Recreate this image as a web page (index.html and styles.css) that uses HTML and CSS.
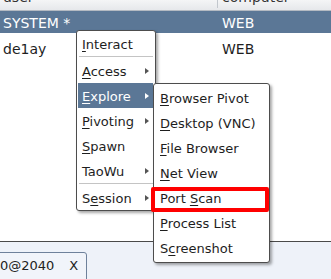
FILE: index.html
```html
<!DOCTYPE html>
<html lang="en">
<head>
  <meta charset="UTF-8" />
  <title>Sessions</title>
  <link rel="stylesheet" href="styles.css">
</head>
<body>
  <div class="table">
    <div class="thead">
      <div class="th">user</div>
      <div class="th th-last">computer</div>
    </div>
    <div class="row selected">
      <div class="td">SYSTEM *</div>
      <div class="td td-last">WEB</div>
    </div>
    <div class="row">
      <div class="td">de1ay</div>
      <div class="td td-last">WEB</div>
    </div>
  </div>

  <div class="dock">
    <div class="tab">0@2040<span class="tab-close">X</span></div>
  </div>

  <!-- context menu -->
  <div class="menu main-menu">
    <div class="item"><u>I</u>nteract</div>
    <div class="sep"></div>
    <div class="item sub"><u>A</u>ccess</div>
    <div class="item sub active"><u>E</u>xplore</div>
    <div class="item sub"><u>P</u>ivoting</div>
    <div class="item"><u>S</u>pawn</div>
    <div class="item sub">TaoWu</div>
    <div class="sep"></div>
    <div class="item sub">S<u>e</u>ssion</div>
  </div>

  <div class="menu sub-menu">
    <div class="item"><u>B</u>rowser Pivot</div>
    <div class="item"><u>D</u>esktop (VNC)</div>
    <div class="item"><u>F</u>ile Browser</div>
    <div class="item"><u>N</u>et View</div>
    <div class="item">Port <u>S</u>can</div>
    <div class="item"><u>P</u>rocess List</div>
    <div class="item">S<u>c</u>reenshot</div>
  </div>

  <div class="mark"></div>
</body>
</html>
```

FILE: styles.css
```css
* {
  margin: 0;
  padding: 0;
  box-sizing: border-box;
}

body {
  font-family: 'DejaVu Sans', 'Liberation Sans', sans-serif;
  font-size: 13px;
  color: #1e1e1e;
  background: #fff;
  width: 331px;
  height: 279px;
  overflow: hidden;
  position: relative;
}

.table {
  height: 242px;
  border-bottom: 1px solid #4a4a4a;
  background: #fff;
  font-size: 14px;
}

.thead {
  display: grid;
  grid-template-columns: 217px 1fr;
  height: 11px;
  overflow: hidden;
  background: linear-gradient(#f4f5f6, #e6e8eb);
  border-bottom: 1px solid #b4bac2;
  color: #333;
}

.th {
  height: 22px;
  line-height: 22px;
  margin-top: -14px;
  padding-left: 3px;
}

.th-last {
  border-left: 1px solid #c2c7cd;
  padding-left: 4px;
}

.row {
  display: grid;
  grid-template-columns: 217px 1fr;
  height: 22px;
  line-height: 25px;
}

.row + .row {
  margin-top: 3px;
  line-height: 26px;
}

.td {
  padding-left: 3px;
  white-space: nowrap;
}

.td-last {
  padding-left: 5px;
}

.selected {
  background: #5b7796;
  color: #fff;
}

.dock {
  height: 37px;
  background: #eef2f9;
  padding-top: 10px;
  overflow: hidden;
}

.tab {
  display: inline-block;
  margin-left: -10px;
  padding-left: 9px;
  padding-right: 8px;
  height: 30px;
  line-height: 26px;
  border: 1px solid #6e819b;
  border-radius: 0 3px 0 0;
  background: #f1f4fa;
  color: #222;
}

.tab-close {
  margin-left: 15px;
}

.menu {
  position: absolute;
  background: #fff;
  border: 1px solid #4d4d4d;
  border-radius: 3px;
  box-shadow: 2px 2px 3px rgba(0, 0, 0, 0.35);
  padding: 0 2px 0 1px;
}

.main-menu {
  left: 76px;
  top: 30px;
  width: 80px;
  height: 181px;
}

.sub-menu {
  left: 153px;
  top: 83px;
  width: 117px;
  height: 180px;
  padding-top: 1px;
}

.item {
  height: 25px;
  line-height: 27px;
  padding-left: 4px;
  position: relative;
  white-space: nowrap;
}

.sub-menu .item {
  padding-left: 5px;
}

.item u {
  text-decoration-thickness: 1px;
  text-underline-offset: 2px;
}

.item.sub::after {
  content: "";
  position: absolute;
  right: 4px;
  top: 10px;
  border-left: 4px solid #555;
  border-top: 3px solid transparent;
  border-bottom: 3px solid transparent;
}

.item.active {
  background: #5b7796;
  color: #fff;
}

.item.active::after {
  border-left-color: #fff;
}

.sep {
  height: 1px;
  margin: 0 0 1px 1px;
  background: #c4c4c4;
}

.mark {
  position: absolute;
  left: 151px;
  top: 187px;
  width: 118px;
  height: 25px;
  border: 4px solid #f00;
  border-radius: 2px;
}
```
